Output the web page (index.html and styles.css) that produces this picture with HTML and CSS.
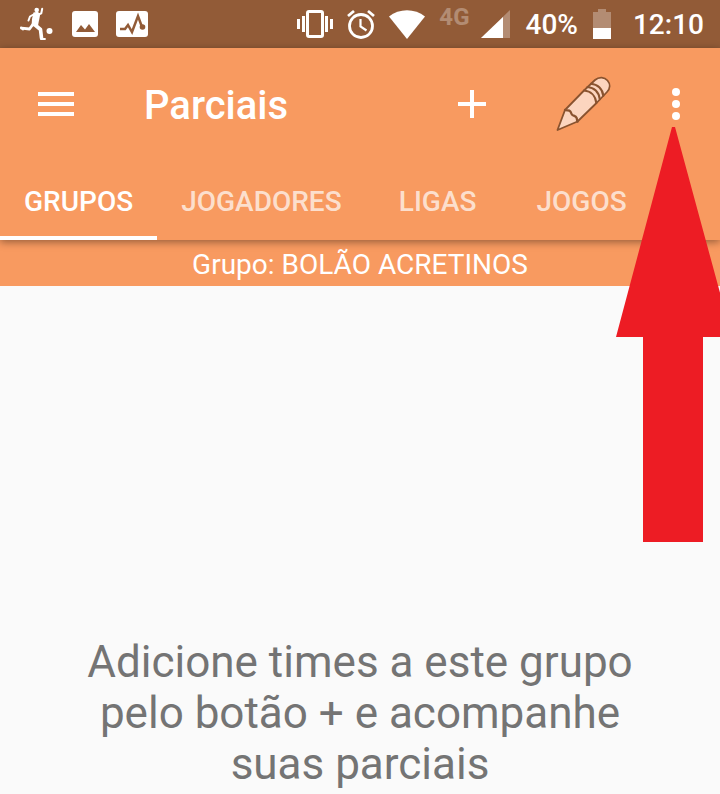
FILE: index.html
```html
<!DOCTYPE html>
<html lang="pt-BR">
<head>
<meta charset="utf-8">
<meta name="viewport" content="width=device-width, initial-scale=1">
<title>Parciais</title>
<link rel="stylesheet" href="styles.css">
</head>
<body>
<div class="screen">
  <div class="status-bar">
    <div class="notifications">
      <svg width="34" height="34" viewBox="0 0 34 34" fill="#fff" aria-hidden="true">
        <circle cx="16.700" cy="3" r="2.300"/>
        <path d="M13.500 5.500l4-.8 2.800 2-1 5.300-1.300 6.500-6.500 1L12 12z"/>
        <g fill="none" stroke="#fff" stroke-linejoin="round" stroke-linecap="round">
          <path d="M18.500 7.500l2.800-1.200.9-4.500M13.500 7.500L10 9.500l-1.500 4" stroke-width="2"/>
          <path d="M13.500 16.500L9.500 22l-8-.9" stroke-width="2.800"/>
          <path d="M14.500 17.500l6 5 1 8.500" stroke-width="3.600"/>
          <path d="M21 32h4M3 22.500L1 20.500" stroke-width="1.800"/>
        </g>
        <circle cx="29.500" cy="24" r="3"/>
      </svg>
      <svg width="26" height="26" viewBox="0 0 26 26" aria-hidden="true">
        <rect width="26" height="26" rx="3" fill="#fff"/>
        <path d="M4 21l5-7 4 4.500 4-5.500 6 8z" fill="#925b37"/>
      </svg>
      <svg width="32" height="26" viewBox="0 0 32 26" aria-hidden="true">
        <rect width="32" height="26" rx="3" fill="#fff"/>
        <path d="M4 18h5l3-4 4 7 6-16 4 11" fill="none" stroke="#925b37" stroke-width="2.500"/>
        <circle cx="26.500" cy="16" r="2.800" fill="#925b37"/>
      </svg>
    </div>
    <div class="system">
      <svg class="vibrate" width="36" height="28" viewBox="0 0 36 28" fill="#fff" aria-hidden="true">
        <path d="M0 9h3v10H0zM5 6h3v16H5zM28 6h3v16h-3zM33 9h3v10h-3z"/>
        <rect x="10.500" y="1.500" width="15" height="25" rx="1.500" fill="none" stroke="#fff" stroke-width="3"/>
      </svg>
      <svg class="alarm" width="28" height="30" viewBox="0 0 28 30" fill="none" stroke="#fff" stroke-width="2.800" aria-hidden="true">
        <circle cx="14" cy="17" r="11.500"/>
        <path d="M1 7l6-5M27 7l-6-5"/>
        <path d="M13.500 10v7.500l6 4" stroke-width="2.200"/>
      </svg>
      <svg class="wifi" width="36" height="29" viewBox="0 0 36 29" aria-hidden="true">
        <path d="M0 6.500C10-2 26-2 36 6.500L18 29z" fill="#fff"/>
      </svg>
      <span class="network">4G</span>
      <svg class="signal" width="29" height="28" viewBox="0 0 29 28" fill="#fff" aria-hidden="true">
        <path d="M0 28L29 0v28z" fill-opacity=".3"/>
        <path d="M0 28L22 7v21z"/>
      </svg>
      <span class="percent">40%</span>
      <svg class="battery" width="20" height="30" viewBox="0 0 20 30" fill="#fff" aria-hidden="true">
        <path d="M1 3h5V0h8v3h5v16H1z" fill-opacity=".3"/>
        <path d="M1 19h18v11H1z"/>
      </svg>
      <span class="clock">12:10</span>
    </div>
  </div>

  <header class="header">
    <div class="app-bar">
      <button class="icon-button menu" type="button" aria-label="Menu">
        <svg width="36" height="24" viewBox="0 0 36 24" fill="#fff"><path d="M0 0h36v4H0zM0 10h36v4H0zM0 20h36v4H0z"/></svg>
      </button>
      <h1 class="title">Parciais</h1>
      <button class="icon-button add" type="button" aria-label="Adicionar">
        <svg width="28" height="28" viewBox="0 0 28 28" fill="#fff"><path d="M12 0h4v12h12v4H16v12h-4V16H0v-4h12z"/></svg>
      </button>
      <button class="icon-button edit" type="button" aria-label="Editar">
        <svg width="56" height="56" viewBox="0 0 56 56" fill="#fcd5bf" stroke="#8a532f" stroke-width="1.800" stroke-linejoin="round" stroke-linecap="round">
          <path d="M1.500 54L9 34 28 14.500 39 4C43 .5 48.500 1 51.500 4.500s2.800 8-.5 11.500L40.500 27 21.500 45.500z"/>
          <path d="M9 34c2 .8 4-.5 5.300 1.300s.7 3.200 2.500 3.900 3.200.8 3.800 2.600.2 2.700 1 3.700" fill="none" stroke-width="2.300"/>
          <path d="M28 14.500c6.500.5 11.500 5 12.300 12.500M31.500 11c6.500.5 11.500 5 12.300 12.300M35 7.800c6.500.5 11.500 5 12.300 12" fill="none" stroke-width="2.100"/>
        </svg>
      </button>
      <button class="icon-button more" type="button" aria-label="Mais opções">
        <svg width="8" height="32" viewBox="0 0 8 32" fill="#fff"><circle cx="4" cy="4" r="4"/><circle cx="4" cy="16" r="4"/><circle cx="4" cy="28" r="4"/></svg>
      </button>
    </div>
    <nav class="tabs">
      <a class="tab active" href="#grupos" aria-current="page">GRUPOS</a>
      <a class="tab" href="#jogadores">JOGADORES</a>
      <a class="tab" href="#ligas">LIGAS</a>
      <a class="tab" href="#jogos">JOGOS</a>
    </nav>
    <svg class="pointer" width="116" height="416" viewBox="0 0 116 416" fill="#ed1c24" aria-hidden="true">
      <path d="M56 0h3l57 210H87v205H27V210H0z"/>
    </svg>
  </header>

  <main>
    <p class="group">Grupo: BOLÃO ACRETINOS</p>
    <p class="message">Adicione times a este grupo pelo botão + e acompanhe suas parciais</p>
  </main>
</div>
</body>
</html>
```
FILE: styles.css
```css
* {
  box-sizing: border-box;
}

body {
  margin: 0;
  background: #fafafa;
  font-family: Roboto, "Liberation Sans", sans-serif;
  color: #fff;
}

svg {
  display: block;
  flex: none;
}

.screen {
  min-height: 100vh;
  overflow: hidden;
}

.status-bar {
  display: flex;
  align-items: center;
  justify-content: space-between;
  height: 48px;
  padding: 0 16px 0 20px;
  background: #925b37;
}

.notifications,
.system {
  display: flex;
  align-items: center;
}

.notifications {
  gap: 18px;
}

.system {
  font-size: 28px;
  font-weight: 500;
  line-height: 48px;
}

.percent,
.clock {
  padding-top: 2px;
}

.alarm,
.wifi {
  margin-left: 14px;
}

.network {
  margin-left: 14px;
  font-size: 24px;
  font-weight: 700;
  line-height: 36px;
  align-self: flex-start;
  opacity: 0.3;
}

.signal {
  margin-left: 11px;
}

.percent {
  margin-left: 16px;
}

.battery {
  margin-left: 14px;
}

.clock {
  margin-left: 21px;
}

.header {
  position: relative;
  z-index: 1;
  background: #f89a60;
  box-shadow: 0 2px 8px rgba(0, 0, 0, 0.4);
}

.app-bar {
  display: flex;
  align-items: center;
  height: 112px;
}

.icon-button {
  display: flex;
  align-items: center;
  justify-content: center;
  flex: none;
  height: 112px;
  padding: 0;
  border: 0;
  background: none;
  cursor: pointer;
}

.menu {
  width: 112px;
}

.title {
  flex: 1;
  margin: 0;
  padding: 4px 0 0 32px;
  font-size: 40px;
  font-weight: 500;
  line-height: 48px;
}

.add,
.edit {
  width: 112px;
}

.more {
  width: 72px;
  margin-right: 8px;
}

.tabs {
  display: flex;
  height: 80px;
}

.tab {
  min-width: 144px;
  padding: 0 24px;
  border-bottom: 4px solid transparent;
  color: rgba(255, 255, 255, 0.7);
  font-size: 28px;
  font-weight: 500;
  line-height: 84px;
  text-align: center;
  text-decoration: none;
}

.tab.active {
  border-color: #fff;
  color: #fff;
}

.pointer {
  position: absolute;
  top: 79px;
  right: -12px;
  pointer-events: none;
}

.group {
  margin: 0;
  padding-top: 4px;
  background: #f89a60;
  font-size: 28px;
  line-height: 42px;
  text-align: center;
}

.message {
  margin: 0;
  padding: 351px 64px 0;
  color: #747474;
  font-size: 44px;
  line-height: 51px;
  text-align: center;
}
```
